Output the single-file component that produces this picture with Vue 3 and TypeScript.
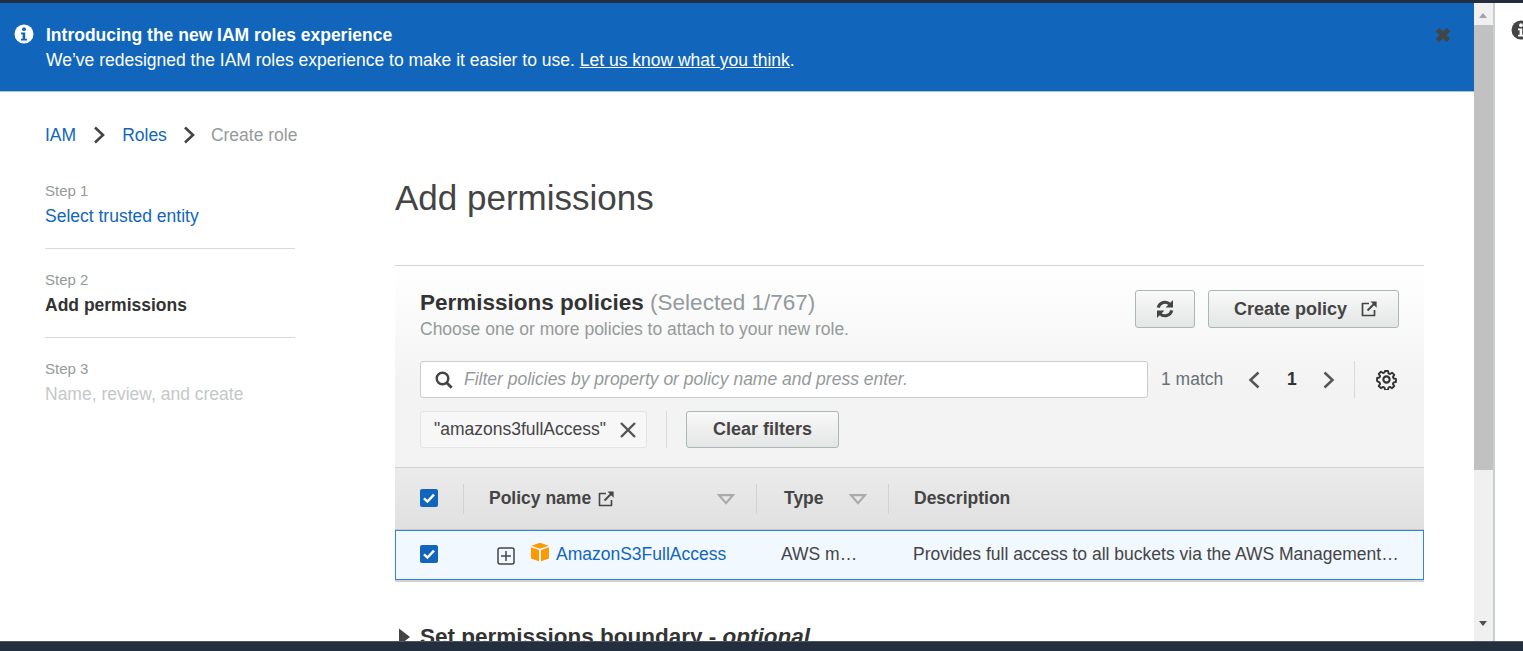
<script setup lang="ts">
const steps = [
  { label: 'Step 1', name: 'Select trusted entity', cls: 'link' },
  { label: 'Step 2', name: 'Add permissions', cls: 'current' },
  { label: 'Step 3', name: 'Name, review, and create', cls: 'disabled' },
]
</script>

<template>
  <div class="app">
    <div class="topbar"></div>
    <div class="middle">
      <main class="main">
        <section class="banner">
          <svg class="banner-info" viewBox="0 0 20 20" width="20" height="20">
            <circle cx="10" cy="10" r="9.5" fill="#fff" />
            <circle cx="10" cy="5.2" r="1.9" fill="#1166bb" />
            <path d="M7 8.5h4.2v6.2H13v1.8H7v-1.8h1.6v-4.4H7z" fill="#1166bb" />
          </svg>
          <div class="banner-text">
            <div class="banner-title">Introducing the new IAM roles experience</div>
            <div>We’ve redesigned the IAM roles experience to make it easier to use. <a class="banner-link">Let us know what you think</a>.</div>
          </div>
          <svg class="banner-close" viewBox="0 0 16 16" width="16" height="16">
            <path d="M2.5 2.5l11 11M13.5 2.5l-11 11" stroke="#444" stroke-width="4.6" fill="none" />
          </svg>
        </section>

        <nav class="crumbs">
          <a class="link">IAM</a>
          <svg class="chev" viewBox="0 0 12 18" width="12" height="18"><path d="M2 1.5l8 7.5-8 7.5" stroke="#444" stroke-width="2.6" fill="none" /></svg>
          <a class="link">Roles</a>
          <svg class="chev" viewBox="0 0 12 18" width="12" height="18"><path d="M2 1.5l8 7.5-8 7.5" stroke="#444" stroke-width="2.6" fill="none" /></svg>
          <span class="crumb-current">Create role</span>
        </nav>

        <div class="content">
          <aside class="steps">
            <div v-for="s in steps" :key="s.label" class="step">
              <div class="step-label">{{ s.label }}</div>
              <div :class="['step-name', s.cls]">{{ s.name }}</div>
            </div>
          </aside>

          <div class="page">
            <h1 class="page-title">Add permissions</h1>

            <section class="panel">
              <div class="panel-head">
                <div class="head-row">
                  <div class="head-text">
                    <h2 class="panel-title">Permissions policies <span class="count">(Selected 1/767)</span></h2>
                    <p class="panel-sub">Choose one or more policies to attach to your new role.</p>
                  </div>
                  <div class="head-actions">
                    <button class="btn btn-icon">
                      <svg viewBox="0 0 20 20" width="20" height="20">
                        <path d="M3.2 8.6A7 7 0 0 1 15 5.3" stroke="#444" stroke-width="3" fill="none" />
                        <path d="M18 1v7.4h-7.4z" fill="#444" />
                        <path d="M16.8 11.4A7 7 0 0 1 5 14.7" stroke="#444" stroke-width="3" fill="none" />
                        <path d="M2 19v-7.4h7.4z" fill="#444" />
                      </svg>
                    </button>
                    <button class="btn btn-create">
                      Create policy
                      <svg viewBox="0 0 18 18" width="18" height="18">
                        <path d="M9 3.5H2.5v12h12V10" stroke="#444" stroke-width="1.7" fill="none" stroke-linejoin="round" />
                        <path d="M7.5 10.5L15.5 2.5" stroke="#444" stroke-width="1.9" fill="none" />
                        <path d="M10.5 1.6h6.1v6.1z" fill="#444" />
                      </svg>
                    </button>
                  </div>
                </div>

                <div class="search-row">
                  <div class="search">
                    <svg viewBox="0 0 18 18" width="18" height="18">
                      <circle cx="7.5" cy="7.5" r="5.8" stroke="#444" stroke-width="2.4" fill="none" />
                      <path d="M11.7 11.7l5 5" stroke="#444" stroke-width="2.8" fill="none" />
                    </svg>
                    <span class="placeholder">Filter policies by property or policy name and press enter.</span>
                  </div>
                  <span class="match">1 match</span>
                  <svg class="pg-prev" viewBox="0 0 12 18" width="12" height="18"><path d="M10.5 1.5L2.5 9l8 7.5" stroke="#555" stroke-width="2.5" fill="none" /></svg>
                  <span class="pg-num">1</span>
                  <svg class="pg-next" viewBox="0 0 12 18" width="12" height="18"><path d="M1.5 1.5l8 7.5-8 7.5" stroke="#555" stroke-width="2.5" fill="none" /></svg>
                  <span class="vsep"></span>
                  <svg class="gear" viewBox="0 0 20 20" width="21" height="21">
                    <circle cx="10" cy="10" r="3" stroke="#333" stroke-width="2" fill="none" />
                    <path d="M8.4 1h3.2l.5 2.5 1.6.7 2.2-1.4 2.3 2.3-1.4 2.2.7 1.6 2.5.5v3.2l-2.5.5-.7 1.6 1.4 2.2-2.3 2.3-2.2-1.4-1.6.7-.5 2.5H8.4l-.5-2.5-1.6-.7-2.2 1.4-2.3-2.3 1.4-2.2-.7-1.6L0 11.6V8.4l2.5-.5.7-1.6-1.4-2.2 2.3-2.3 2.2 1.4 1.6-.7z" stroke="#333" stroke-width="2" fill="none" stroke-linejoin="round" transform="translate(1 1) scale(.9)" />
                  </svg>
                </div>

                <div class="filter-row">
                  <div class="token">
                    <span>"amazons3fullAccess"</span>
                    <svg viewBox="0 0 18 18" width="18" height="18"><path d="M2 2l14 14M16 2L2 16" stroke="#555" stroke-width="2.4" fill="none" /></svg>
                  </div>
                  <span class="vsep filter-sep"></span>
                  <button class="btn btn-clear">Clear filters</button>
                </div>
              </div>

              <div class="table-head">
                <div class="cell-check">
                  <span class="checkbox">
                    <svg viewBox="0 0 18 18" width="18" height="18"><path d="M4 9.3l3.4 3.2L14 5.6" stroke="#fff" stroke-width="2.4" fill="none" /></svg>
                  </span>
                </div>
                <div class="th th-name">
                  <span>Policy name</span>
                  <svg viewBox="0 0 18 18" width="18" height="18">
                    <path d="M9 3.5H2.5v12h12V10" stroke="#444" stroke-width="1.6" fill="none" stroke-linejoin="round" />
                    <path d="M7.5 10.5L15.5 2.5" stroke="#444" stroke-width="1.8" fill="none" />
                    <path d="M10.5 1.6h6.1v6.1z" fill="#444" />
                  </svg>
                  <svg class="sort" viewBox="0 0 18 11" width="18" height="11"><path d="M2 1.2h14L9 9.2z" stroke="#aaa" stroke-width="2.2" fill="none" /></svg>
                </div>
                <div class="th th-type">
                  <span>Type</span>
                  <svg class="sort" viewBox="0 0 18 11" width="18" height="11"><path d="M2 1.2h14L9 9.2z" stroke="#aaa" stroke-width="2.2" fill="none" /></svg>
                </div>
                <div class="th th-desc">Description</div>
              </div>

              <div class="table-row">
                <div class="cell-check">
                  <span class="checkbox">
                    <svg viewBox="0 0 18 18" width="18" height="18"><path d="M4 9.3l3.4 3.2L14 5.6" stroke="#fff" stroke-width="2.4" fill="none" /></svg>
                  </span>
                </div>
                <div class="td-name">
                  <svg class="expand" viewBox="0 0 18 18" width="18" height="18">
                    <rect x="1" y="1" width="16" height="16" rx="2" stroke="#444" stroke-width="1.5" fill="none" />
                    <path d="M9 4v10M4 9h10" stroke="#444" stroke-width="1.5" fill="none" />
                  </svg>
                  <svg class="cube" viewBox="0 0 20 20" width="20" height="20">
                    <path d="M10 .8l8.6 3-8.6 3-8.6-3z" fill="#f90" />
                    <path d="M1 5.2l8 2.8v11.2l-8-2.6z" fill="#f90" />
                    <path d="M19 5.2l-8 2.8v11.2l8-2.6z" fill="#f90" />
                  </svg>
                  <a class="link">AmazonS3FullAccess</a>
                </div>
                <div class="td-type">AWS m…</div>
                <div class="td-desc">Provides full access to all buckets via the AWS Management Console.</div>
              </div>
            </section>

            <div class="boundary">
              <svg viewBox="0 0 12 18" width="13" height="18"><path d="M.5.5l11 8.500-11 8.500z" fill="#444" /></svg>
              <span>Set permissions boundary - <em>optional</em></span>
            </div>
          </div>
        </div>
      </main>

      <div class="scrollbar">
        <div class="arrow-up"></div>
        <div class="thumb"></div>
        <div class="track"></div>
        <div class="arrow-down"></div>
      </div>

      <aside class="side">
        <svg viewBox="0 0 20 20" width="20" height="20">
          <circle cx="10" cy="10" r="9.5" fill="#444" />
          <circle cx="10" cy="5.2" r="1.9" fill="#fff" />
          <path d="M7 8.5h4.2v6.2H13v1.8H7v-1.8h1.6v-4.4H7z" fill="#fff" />
        </svg>
      </aside>
    </div>
    <div class="bottombar"></div>
  </div>
</template>

<style>
html, body { margin: 0; overflow: hidden; background: #fff; }
</style>

<style scoped>
* { box-sizing: border-box; }
.app {
  width: 1523px; height: 651px; display: flex; flex-direction: column; overflow: hidden;
  font-family: "Liberation Sans", Arial, sans-serif; font-size: 17.5px; color: #444; background: #fff;
}
.topbar { height: 3px; background: #232f3e; flex: none; }
.bottombar { height: 10px; background: #232f3e; flex: none; border-top: 1px solid #4a5561; }
.middle { flex: 1; display: flex; min-height: 0; }
.main { width: 1474px; flex: none; overflow: hidden; }
.banner {
  height: 89px; background: #1166bb; color: #fff; display: flex; padding: 20px 23px 0 14px;
  border-bottom: 1px solid #a9c0d8; line-height: 25px;
}
.banner-info { margin: 1px 12px 0 0; flex: none; }
.banner-text { flex: 1; }
.banner-title { font-weight: 700; }
.banner-link { text-decoration: underline; }
.banner-close { margin-top: 4px; }
.crumbs { display: flex; align-items: center; padding: 32px 0 0 45px; height: 54px; line-height: 22px; }
.chev { margin: 0 17px; }
.crumbs .chev:nth-of-type(2) { margin: 0 16px; }
.link { color: #1166bb; }
.crumb-current { color: #959a9a; }
.content { display: flex; }
.steps { width: 250px; margin-left: 45px; padding-top: 35px; flex: none; }
.step { width: 250px; height: 89px; padding-top: 21px; }
.step + .step { border-top: 1px solid #d5dbdb; }
.step:first-child { height: 67px; padding-top: 0; }
.step-label { font-size: 15px; color: #959a9a; line-height: 20px; margin-bottom: 3px; }
.step-name { line-height: 24px; }
.step-name.current { font-weight: 700; color: #333; }
.step-name.disabled { color: #c4c8c8; }
.page { margin-left: 100px; width: 1029px; flex: none; }
.page-title { margin: 0; padding-top: 27px; font-size: 35px; font-weight: 400; line-height: 50px; height: 77px; color: #444; }
.panel { margin-top: 42px; border-top: 1px solid #cfd3d3; }
.panel-head {
  height: 201px; padding: 23px 25px 0; background: linear-gradient(#fff, #f3f3f3 60%);
}
.head-row { display: flex; justify-content: space-between; height: 72px; }
.panel-title { margin: 0; font-size: 22.5px; line-height: 27px; font-weight: 700; color: #333; }
.count { font-weight: 400; color: #959a9a; }
.panel-sub { margin: 0; font-size: 17.5px; line-height: 26px; color: #959a9a; }
.head-actions { display: flex; gap: 13px; margin-top: 1px; height: 38px; }
.btn {
  font: inherit; font-size: 18px; height: 38px; border: 1px solid #aab7b8; border-radius: 3px; color: #444;
  background: linear-gradient(#f9f9f9, #e4e5e5); font-weight: 700; padding: 0;
  display: flex; align-items: center; justify-content: center;
}
.btn-icon { width: 60px; }
.btn-create { width: 191px; gap: 13px; padding-left: 5px; }
.search-row { display: flex; align-items: center; height: 37px; }
.search {
  width: 728px; height: 37px; background: #fff; border: 1px solid #c8cccc; border-radius: 3px;
  display: flex; align-items: center; padding-left: 14px; gap: 11px;
}
.placeholder { font-style: italic; color: #959a9a; white-space: nowrap; }
.match { margin-left: 13px; color: #687078; width: 62px; white-space: nowrap; }
.pg-prev { margin-left: 25px; }
.pg-num { margin-left: 27px; font-weight: 700; color: #333; width: 10px; }
.pg-next { margin-left: 26px; }
.vsep { width: 1px; height: 37px; background: #d5dbdb; margin-left: 19px; flex: none; }
.gear { margin-left: 21px; }
.filter-row { display: flex; align-items: center; margin-top: 13px; height: 37px; }
.token {
  width: 227px; height: 37px; background: #f7f7f7; border: 1px solid #e3e5e5; border-radius: 3px;
  display: flex; align-items: center; justify-content: space-between; padding: 0 9px 0 13px; color: #444; white-space: nowrap;
}
.filter-sep { margin-left: 19px; }
.btn-clear { width: 153px; height: 37px; margin-left: 19px; }
.table-head {
  height: 63px; display: flex; align-items: center; background: linear-gradient(#ebebeb, #e0e0e0);
  border-top: 1px solid #cfd3d3; border-bottom: 1px solid #c4c8c8; font-weight: 700; color: #444;
}
.cell-check { width: 68px; flex: none; padding-left: 25px; display: flex; align-items: center; margin-top: -2px; }
.checkbox { width: 18px; height: 18px; border-radius: 2px; background: #1166bb; display: block; }
.checkbox svg { display: block; }
.th { height: 30px; display: flex; align-items: center; border-left: 1px solid #cfd3d3; flex: none; }
.th-name { width: 293px; padding-left: 25px; gap: 6px; }
.th-name .sort { margin-left: 96px; margin-top: 1px; }
.th-type { width: 132px; padding-left: 27px; }
.th-type .sort { margin-left: 25px; margin-top: 1px; }
.th-desc { flex: 1; padding-left: 25px; }
.table-row {
  height: 50px; display: flex; align-items: center; background: #f1f8ff;
  border: 1px solid #3184d6; box-shadow: 0 2px 0 #d2d2d2;
}
.table-row .cell-check { width: 67px; padding-left: 24px; }
.td-name { width: 318px; flex: none; display: flex; align-items: center; padding-left: 34px; margin-top: -1px; }
.expand { margin-top: 3px; }
.cube { margin: -5px 6px 0 15px; }
.td-type { width: 132px; flex: none; margin-top: -1px; }
.td-desc { width: 486px; flex: none; white-space: nowrap; overflow: hidden; text-overflow: ellipsis; margin-top: -1px; }
.boundary {
  display: flex; align-items: center; gap: 9px; margin: 43px 0 0 3px; font-size: 22.5px; font-weight: 700; color: #333; line-height: 27px; white-space: nowrap;
}
.scrollbar { width: 21px; flex: none; background: #f0f0f0; border-right: 2px solid #c9cfcf; display: flex; flex-direction: column; align-items: center; }
.arrow-up { height: 22px; flex: none; width: 100%; position: relative; }
.arrow-up::after {
  content: ""; position: absolute; left: 5px; top: 10px; border-left: 4px solid transparent; border-right: 4px solid transparent; border-bottom: 5px solid #a3a3a3;
}
.thumb { width: 100%; height: 445px; background: #c1c1c1; flex: none; }
.track { flex: 1; }
.arrow-down { height: 22px; flex: none; width: 100%; position: relative; }
.arrow-down::after {
  content: ""; position: absolute; left: 5px; top: 2px; border-left: 4px solid transparent; border-right: 4px solid transparent; border-top: 5px solid #505050;
}
.side { flex: 1; overflow: hidden; padding: 17px 0 0 16px; }
.side svg { display: block; }
</style>
